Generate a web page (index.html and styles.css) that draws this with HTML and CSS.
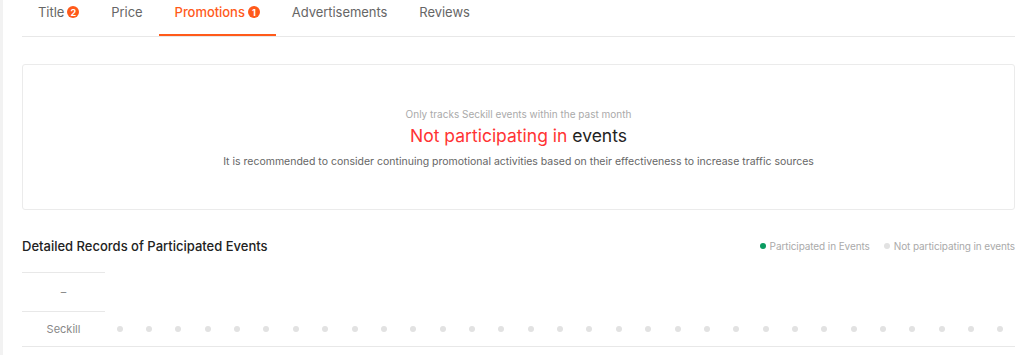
FILE: index.html
```html
<!DOCTYPE html>
<html lang="en">
<head>
    <meta charset="UTF-8">
    <meta name="viewport" content="width=device-width, initial-scale=1.0">
    <title>Promotions</title>
    <link rel="stylesheet" href="styles.css">
</head>
<body>
    <div class="page">
        <div class="tabs">
            <div class="tab">Title <span class="badge">2</span></div>
            <div class="tab">Price</div>
            <div class="tab active">Promotions <span class="badge">1</span></div>
            <div class="tab">Advertisements</div>
            <div class="tab">Reviews</div>
        </div>

        <div class="summary-card">
            <p class="hint">Only tracks Seckill events within the past month</p>
            <p class="status"><span class="warn">Not participating in</span> events</p>
            <p class="advice">It is recommended to consider continuing promotional activities based on their effectiveness to increase traffic sources</p>
        </div>

        <div class="section-head">
            <h3>Detailed Records of Participated Events</h3>
            <div class="legend">
                <span class="legend-item"><i class="dot on"></i>Participated in Events</span>
                <span class="legend-item"><i class="dot"></i>Not participating in events</span>
            </div>
        </div>

        <div class="records">
            <div class="row head-row">
                <div class="label">–</div>
                <div class="cells"></div>
            </div>
            <div class="row last-row">
                <div class="label">Seckill</div>
                <div class="cells" id="seckillDays"></div>
            </div>
        </div>
    </div>

    <script>
// one dot per day of the past month
const days = document.getElementById('seckillDays');
for (let i = 0; i < 31; i++) {
    const cell = document.createElement('span');
    cell.className = 'day';
    cell.innerHTML = '<i class="dot"></i>';
    days.appendChild(cell);
}
    </script>
</body>
</html>
```

FILE: styles.css
```css
body {
    margin: 0;
    font-family: Inter, "Noto Sans", Arial, sans-serif;
    color: #333;
    background-color: #fff;
}

.page {
    border-left: 3px solid #f2f2f2;
    padding: 0 9px 0 19px;
    min-height: 355px;
    box-sizing: border-box;
}

.tabs {
    display: flex;
    border-bottom: 1px solid #e8e8e8;
    height: 37px;
    box-sizing: border-box;
}

.tab {
    padding: 3px 16px 0;
    height: 36px;
    line-height: 19px;
    font-size: 13px;
    letter-spacing: -0.05px;
    color: #666;
    box-sizing: border-box;
    display: flex;
    align-items: flex-start;
    gap: 3px;
    border-bottom: 2px solid transparent;
}

.tab.active {
    color: #ff5a1a;
    font-weight: 500;
    border-bottom-color: #ff5a1a;
}

.badge {
    display: inline-flex;
    align-items: center;
    justify-content: center;
    width: 12px;
    height: 12px;
    margin-top: 3px;
    border-radius: 50%;
    background-color: #ff5a1a;
    color: #fff;
    font-size: 9px;
    font-weight: 700;
    letter-spacing: 0;
    line-height: 1;
}

.summary-card {
    margin-top: 27px;
    height: 146px;
    border: 1px solid #ebebeb;
    border-radius: 3px;
    box-sizing: border-box;
    display: flex;
    flex-direction: column;
    align-items: center;
    justify-content: center;
    text-align: center;
}

.summary-card p {
    margin: 0;
}

.hint {
    font-size: 10px;
    color: #aaa;
    line-height: 14px;
    margin-top: 2px !important;
}

.status {
    font-size: 17.5px;
    line-height: 22px;
    margin-top: 4px !important;
    color: #222;
}

.warn {
    color: #ff3333;
}

.advice {
    font-size: 10.5px;
    color: #666;
    line-height: 16px;
    margin-top: 7px !important;
}

.section-head {
    display: flex;
    justify-content: space-between;
    align-items: center;
    margin-top: 26px;
    height: 20px;
}

.section-head h3 {
    margin: 0;
    font-size: 13px;
    font-weight: 500;
    color: #222;
}

.legend {
    display: flex;
    gap: 14px;
    font-size: 10px;
    letter-spacing: -0.1px;
    color: #aaa;
}

.legend-item {
    display: flex;
    align-items: center;
    gap: 4px;
}

.dot {
    display: inline-block;
    width: 6px;
    height: 6px;
    border-radius: 50%;
    background-color: #e2e2e2;
}

.dot.on {
    background-color: #0a9b60;
}

.records {
    margin-top: 16px;
}

.row {
    display: flex;
}

.label {
    width: 83px;
    flex-shrink: 0;
    text-align: center;
    font-size: 11px;
    color: #888;
    border-top: 1px solid #e8e8e8;
    box-sizing: border-box;
}

.head-row .label {
    height: 39px;
    line-height: 38px;
}

.last-row {
    border-bottom: 1px solid #e8e8e8;
}

.last-row .label {
    height: 35px;
    line-height: 34px;
}

.cells {
    flex: 1;
    display: flex;
}

.day {
    flex: 1;
    display: flex;
    align-items: center;
    justify-content: center;
}
```
